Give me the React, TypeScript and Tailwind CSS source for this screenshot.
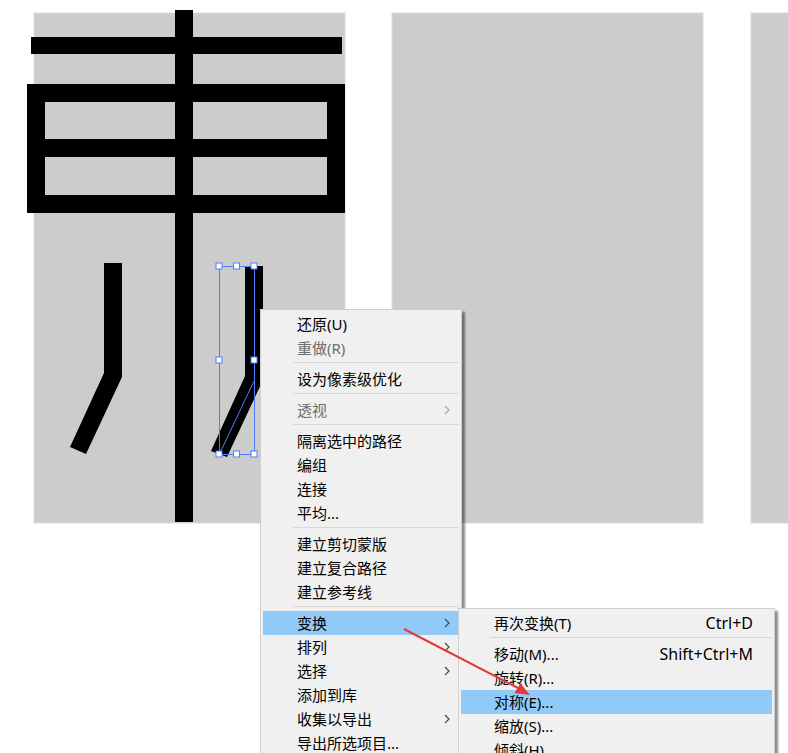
import React from "react";

type Item =
  | { sep: true }
  | { label: string; disabled?: boolean; sub?: boolean; active?: boolean; shortcut?: string };

const mainItems: Item[] = [
  { label: "还原(U)" },
  { label: "重做(R)", disabled: true },
  { sep: true },
  { label: "设为像素级优化" },
  { sep: true },
  { label: "透视", disabled: true, sub: true },
  { sep: true },
  { label: "隔离选中的路径" },
  { label: "编组" },
  { label: "连接" },
  { label: "平均..." },
  { sep: true },
  { label: "建立剪切蒙版" },
  { label: "建立复合路径" },
  { label: "建立参考线" },
  { sep: true },
  { label: "变换", sub: true, active: true },
  { label: "排列", sub: true },
  { label: "选择", sub: true },
  { label: "添加到库" },
  { label: "收集以导出", sub: true },
  { label: "导出所选项目..." },
];

const subItems: Item[] = [
  { label: "再次变换(T)", shortcut: "Ctrl+D" },
  { sep: true },
  { label: "移动(M)...", shortcut: "Shift+Ctrl+M" },
  { label: "旋转(R)..." },
  { label: "对称(E)...", active: true },
  { label: "缩放(S)..." },
  { label: "倾斜(H)..." },
];

function Chevron({ disabled }: { disabled?: boolean }) {
  return (
    <svg width="6" height="10" viewBox="0 0 6 10" className="shrink-0">
      <polyline
        points="1,1 5,5 1,9"
        fill="none"
        stroke={disabled ? "#a8a8a8" : "#4a4a4a"}
        strokeWidth="1.2"
      />
    </svg>
  );
}

function Menu({ items, sepIndent, textIndent }: { items: Item[]; sepIndent: string; textIndent: string }) {
  return (
    <div className="flex flex-col">
      {items.map((it, i) =>
        "sep" in it ? (
          <div key={i} className={`h-[7px] pt-[2px] ${sepIndent}`}>
            <div className="h-px bg-[#d7d7d7]" />
          </div>
        ) : (
          <div
            key={i}
            className={`flex h-6 items-center justify-between pr-[9px] ${textIndent} ${
              it.active ? "bg-[#91c9f7]" : ""
            } ${it.disabled ? "text-[#6d6d6d]" : "text-black"}`}
          >
            <span className="whitespace-nowrap">{it.label}</span>
            {it.sub && <Chevron disabled={it.disabled} />}
            {it.shortcut && <span className="whitespace-nowrap pr-[10px] text-[16px]">{it.shortcut}</span>}
          </div>
        )
      )}
    </div>
  );
}

function Artwork() {
  const handles: [number, number][] = [
    [219, 266],
    [236.5, 266],
    [254, 266],
    [219, 360],
    [254, 360],
    [219, 454],
    [236.5, 454],
    [254, 454],
  ];
  return (
    <svg width="788" height="753" viewBox="0 0 788 753" className="absolute left-0 top-0">
      {/* artboards */}
      <rect x="34" y="13" width="311" height="510" fill="#cccccc" stroke="#dcdcdc" />
      <rect x="392" y="13" width="311" height="510" fill="#cccccc" stroke="#dcdcdc" />
      <rect x="751" y="13" width="60" height="510" fill="#cccccc" stroke="#dcdcdc" />

      {/* glyph strokes */}
      <rect x="31" y="37" width="311" height="17" fill="#000" />
      <rect x="27" y="84" width="318" height="18" fill="#000" />
      <rect x="27" y="139" width="318" height="18" fill="#000" />
      <rect x="27" y="195" width="318" height="18" fill="#000" />
      <rect x="27" y="84" width="18" height="129" fill="#000" />
      <rect x="327" y="84" width="18" height="129" fill="#000" />
      <rect x="175" y="10" width="18" height="512" fill="#000" />
      <polygon points="104,263 122,263 122,377 86,454 70,447 104,373" fill="#000" />
      <polygon points="245,266 263,266 263,380 227,457 211,451 245,376" fill="#000" />

      {/* selection */}
      <rect x="219.5" y="266.5" width="35" height="188" fill="none" stroke="#4f7cff" />
      <line x1="254" y1="381" x2="219.5" y2="454" stroke="#4f7cff" />
      {handles.map(([x, y], i) => (
        <rect key={i} x={x - 3} y={y - 3} width="6" height="6" fill="#fff" stroke="#4f7cff" />
      ))}
    </svg>
  );
}

export default function App() {
  return (
    <div className="relative h-[753px] w-[788px] overflow-hidden bg-white font-['Noto_Sans','Noto_Sans_CJK_SC',sans-serif] text-[15px]">
      <Artwork />

      {/* context menu */}
      <div className="absolute left-[260px] top-[309px] w-[202px] border border-[#cfcfcf] bg-[#f0f0f0] p-[2px] shadow-[3px_3px_2px_rgba(0,0,0,0.45)]">
        <Menu items={mainItems} sepIndent="ml-[30px]" textIndent="pl-[34px]" />
      </div>

      {/* transform submenu */}
      <div className="absolute left-[458px] top-[608px] w-[317px] border border-[#cfcfcf] bg-[#f0f0f0] p-[2px] shadow-[3px_3px_2px_rgba(0,0,0,0.45)]">
        <Menu items={subItems} sepIndent="ml-[29px]" textIndent="pl-[33px]" />
      </div>

      {/* annotation arrow */}
      <svg width="788" height="753" viewBox="0 0 788 753" className="pointer-events-none absolute left-0 top-0">
        <line x1="404" y1="629" x2="520" y2="689" stroke="#e5373a" strokeWidth="2" />
        <polygon points="530,695 514.5,693 520.5,683.5" fill="#e5373a" />
      </svg>
    </div>
  );
}
